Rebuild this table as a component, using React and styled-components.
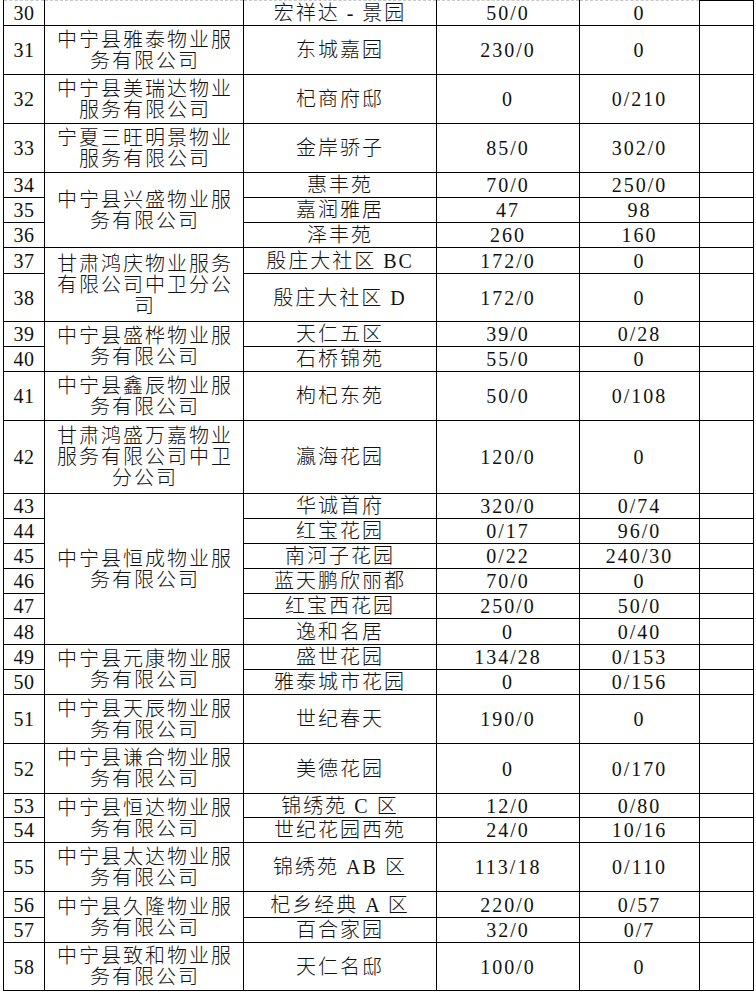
import styled, { createGlobalStyle } from "styled-components";

const GlobalStyle = createGlobalStyle`
    html, body {
        margin: 0;
        padding: 0;
        background: #fff;
    }
    body {
        padding: 0 0 0 3px;
        font-family: "Liberation Serif", "Noto Sans CJK SC", serif;
        color: #111;
    }
`;

const COLUMNS = [41, 199, 193, 143, 120, 54];

// rows from the continuation page; company holds text + rowspan where the merged cell starts
const ROWS = [
    { n: 30, h: 25, company: { text: "", span: 1 }, name: "宏祥达 - 景园", a: "50/0", b: "0" },
    { n: 31, h: 49, company: { text: "中宁县雅泰物业服务有限公司", span: 1 }, name: "东城嘉园", a: "230/0", b: "0" },
    { n: 32, h: 49, company: { text: "中宁县美瑞达物业服务有限公司", span: 1 }, name: "杞商府邸", a: "0", b: "0/210" },
    { n: 33, h: 49, company: { text: "宁夏三旺明景物业服务有限公司", span: 1 }, name: "金岸骄子", a: "85/0", b: "302/0" },
    { n: 34, h: 25, company: { text: "中宁县兴盛物业服务有限公司", span: 3 }, name: "惠丰苑", a: "70/0", b: "250/0" },
    { n: 35, h: 25, name: "嘉润雅居", a: "47", b: "98" },
    { n: 36, h: 25, name: "泽丰苑", a: "260", b: "160" },
    { n: 37, h: 26, company: { text: "甘肃鸿庆物业服务有限公司中卫分公司", span: 2 }, name: "殷庄大社区 BC", a: "172/0", b: "0" },
    { n: 38, h: 48, name: "殷庄大社区 D", a: "172/0", b: "0" },
    { n: 39, h: 25, company: { text: "中宁县盛桦物业服务有限公司", span: 2 }, name: "天仁五区", a: "39/0", b: "0/28" },
    { n: 40, h: 25, name: "石桥锦苑", a: "55/0", b: "0" },
    { n: 41, h: 49, company: { text: "中宁县鑫辰物业服务有限公司", span: 1 }, name: "枸杞东苑", a: "50/0", b: "0/108" },
    { n: 42, h: 73, company: { text: "甘肃鸿盛万嘉物业服务有限公司中卫分公司", span: 1 }, name: "瀛海花园", a: "120/0", b: "0" },
    { n: 43, h: 25, company: { text: "中宁县恒成物业服务有限公司", span: 6 }, name: "华诚首府", a: "320/0", b: "0/74" },
    { n: 44, h: 25, name: "红宝花园", a: "0/17", b: "96/0" },
    { n: 45, h: 25, name: "南河子花园", a: "0/22", b: "240/30" },
    { n: 46, h: 25, name: "蓝天鹏欣丽都", a: "70/0", b: "0" },
    { n: 47, h: 25, name: "红宝西花园", a: "250/0", b: "50/0" },
    { n: 48, h: 26, name: "逸和名居", a: "0", b: "0/40" },
    { n: 49, h: 25, company: { text: "中宁县元康物业服务有限公司", span: 2 }, name: "盛世花园", a: "134/28", b: "0/153" },
    { n: 50, h: 25, name: "雅泰城市花园", a: "0", b: "0/156" },
    { n: 51, h: 49, company: { text: "中宁县天辰物业服务有限公司", span: 1 }, name: "世纪春天", a: "190/0", b: "0" },
    { n: 52, h: 50, company: { text: "中宁县谦合物业服务有限公司", span: 1 }, name: "美德花园", a: "0", b: "0/170" },
    { n: 53, h: 24, company: { text: "中宁县恒达物业服务有限公司", span: 2 }, name: "锦绣苑 C 区", a: "12/0", b: "0/80" },
    { n: 54, h: 25, name: "世纪花园西苑", a: "24/0", b: "10/16" },
    { n: 55, h: 49, company: { text: "中宁县太达物业服务有限公司", span: 1 }, name: "锦绣苑 AB 区", a: "113/18", b: "0/110" },
    { n: 56, h: 26, company: { text: "中宁县久隆物业服务有限公司", span: 2 }, name: "杞乡经典 A 区", a: "220/0", b: "0/57" },
    { n: 57, h: 25, name: "百合家园", a: "32/0", b: "0/7" },
    { n: 58, h: 48, company: { text: "中宁县致和物业服务有限公司", span: 1 }, name: "天仁名邸", a: "100/0", b: "0" },
];

const Sheet = styled.table`
    border-collapse: collapse;
    table-layout: fixed;
    width: 750px;
    font-size: 20px;
    font-weight: 300;
    letter-spacing: 2px;
`;

const Col = styled.col`
    width: ${({ $w }) => $w}px;
`;

const Row = styled.tr`
    height: ${({ $h }) => $h}px;
`;

const Cell = styled.td`
    border: 1px solid #000;
    border-top: ${({ $first }) => ($first ? "1px dashed #c8c8c8" : "1px solid #000")};
    padding: 1px 0 0;
    text-align: center;
    vertical-align: middle;
    line-height: 21px;
    white-space: nowrap;
`;

const NumCell = styled(Cell)`
    letter-spacing: 0.5px;
`;

const CompanyCell = styled(Cell)`
    white-space: normal;
    padding: 1px 10px 0 12px;
    word-break: break-all;
`;

const BlankCell = styled.td`
    border: 1px solid #000;
    padding: 0;
`;

export default function App() {
    return (
        <>
            <GlobalStyle />
            <Sheet>
                <colgroup>
                    {COLUMNS.map((w, i) => (
                        <Col key={i} $w={w} />
                    ))}
                </colgroup>
                <tbody>
                    {ROWS.map((row, i) => (
                        <Row key={row.n} $h={row.h}>
                            <NumCell $first={i === 0}>{row.n}</NumCell>
                            {row.company && (
                                <CompanyCell $first={i === 0} rowSpan={row.company.span}>
                                    {row.company.text}
                                </CompanyCell>
                            )}
                            <Cell $first={i === 0}>{row.name}</Cell>
                            <Cell $first={i === 0}>{row.a}</Cell>
                            <Cell $first={i === 0}>{row.b}</Cell>
                            <BlankCell />
                        </Row>
                    ))}
                </tbody>
            </Sheet>
        </>
    );
}
